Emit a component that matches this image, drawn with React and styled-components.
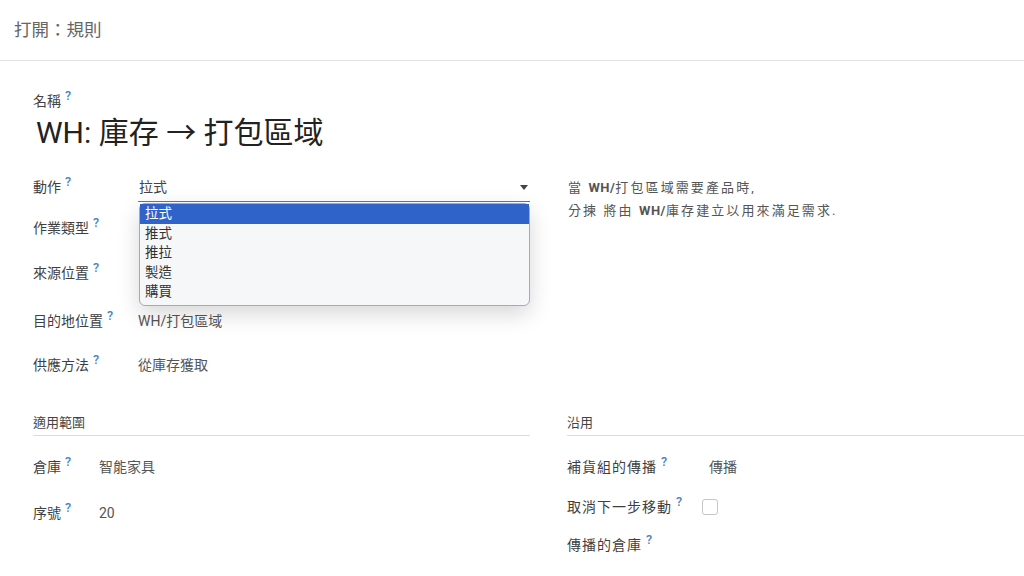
import React from 'react';
import styled, { createGlobalStyle } from 'styled-components';

const GlobalStyle = createGlobalStyle`
  html, body {
    margin: 0;
    padding: 0;
    background: #ffffff;
  }
  body {
    font-family: Roboto, "Noto Sans CJK TC", "Noto Sans", sans-serif;
    color: #333333;
  }
`;

const Page = styled.div`
  width: 1024px;
  height: 576px;
  overflow: hidden;
  background: #ffffff;
`;

const ControlBar = styled.div`
  height: 61px;
  display: flex;
  align-items: center;
  padding: 0 0 4px 14px;
  box-sizing: border-box;
  border-bottom: 1px solid #e3e3e3;
  font-size: 17.5px;
  color: #666666;
`;

const Sheet = styled.div`
  padding: 30px 0 0 33px;
`;

const NameLabel = styled.div`
  font-size: 14px;
  color: #444444;
  line-height: 20px;
`;

const Title = styled.h1`
  margin: 4px 0 0 3px;
  font-size: 30px;
  font-weight: 400;
  color: #222222;
  line-height: 36px;
`;

const TopGrid = styled.div`
  display: grid;
  grid-template-columns: 497px 1fr;
  column-gap: 38px;
  margin-top: 26px;
`;

const FieldList = styled.div`
  display: flex;
  flex-direction: column;
`;

const Row = styled.div`
  display: flex;
  align-items: flex-start;
  height: ${(p) => p.h || 44}px;
`;

const Label = styled.div`
  width: ${(p) => p.w}px;
  flex-shrink: 0;
  font-size: 14px;
  line-height: 20px;
  color: #3f3f3f;
  letter-spacing: ${(p) => p.ls || 0}px;
`;

const Help = styled.span`
  display: inline-block;
  font-size: 12.5px;
  font-weight: 500;
  line-height: 0;
  color: #4a84c0;
  margin-left: 4px;
  letter-spacing: 0;
  transform: translateY(-6px);
`;

const Value = styled.div`
  font-size: 14px;
  line-height: 20px;
  color: #555555;
`;

const SelectWrap = styled.div`
  position: relative;
  flex: 1;
`;

const Select = styled.div`
  height: 24px;
  display: flex;
  align-items: flex-start;
  justify-content: space-between;
  padding: 0 2px 0 1px;
  font-size: 14px;
  line-height: 20px;
  color: #444444;
  border-bottom: 1px solid #6a6fa8;
`;

const Caret = styled.span`
  width: 0;
  height: 0;
  margin-top: 8px;
  border-left: 4.5px solid transparent;
  border-right: 4.5px solid transparent;
  border-top: 5px solid #444444;
`;

const Menu = styled.ul`
  position: absolute;
  top: 26px;
  left: 1px;
  right: 0;
  margin: 0;
  padding: 0 0 3px;
  list-style: none;
  background: #f6f7f9;
  border: 1px solid #a9aab0;
  border-radius: 6px;
  box-shadow: 0 8px 22px rgba(0, 0, 0, 0.16);
  z-index: 5;
`;

const Option = styled.li`
  height: 19.5px;
  line-height: 19.5px;
  padding-left: 5px;
  font-size: 13.5px;
  color: ${(p) => (p.active ? '#ffffff' : '#333333')};
  background: ${(p) => (p.active ? '#3063c9' : 'transparent')};
`;

const HelpText = styled.div`
  font-size: 13px;
  line-height: 23px;
  color: #555555;
  letter-spacing: 2.1px;
  margin-top: -1px;
  b {
    font-weight: 700;
    letter-spacing: 0.5px;
  }
`;

const GroupsGrid = styled.div`
  display: grid;
  grid-template-columns: 497px 1fr;
  column-gap: 37px;
  margin-top: 29px;
`;

const GroupTitle = styled.div`
  font-size: 13px;
  line-height: 18px;
  color: #444444;
  padding-bottom: 3px;
  border-bottom: 1px solid #dcdcdc;
  margin-bottom: 21px;
`;

const Checkbox = styled.span`
  display: inline-block;
  width: 14px;
  height: 14px;
  border: 1px solid #c5c5c5;
  border-radius: 3px;
  margin: 2px 0 0 -1px;
  background: #ffffff;
`;

const actions = ['拉式', '推式', '推拉', '製造', '購買'];

export default function App() {
  return (
    <Page>
      <GlobalStyle />
      <ControlBar>打開：規則</ControlBar>
      <Sheet>
        <NameLabel>
          名稱<Help>?</Help>
        </NameLabel>
        <Title>WH: 庫存 → 打包區域</Title>
        <TopGrid>
          <FieldList>
            <Row h={41}>
              <Label w={105}>
                動作<Help>?</Help>
              </Label>
              <SelectWrap>
                <Select>
                  拉式
                  <Caret />
                </Select>
                <Menu>
                  {actions.map((a, i) => (
                    <Option key={a} active={i === 0}>
                      {a}
                    </Option>
                  ))}
                </Menu>
              </SelectWrap>
            </Row>
            <Row h={45}>
              <Label w={105}>
                作業類型<Help>?</Help>
              </Label>
            </Row>
            <Row h={48}>
              <Label w={105}>
                來源位置<Help>?</Help>
              </Label>
            </Row>
            <Row h={44}>
              <Label w={105}>
                目的地位置<Help>?</Help>
              </Label>
              <Value>WH/打包區域</Value>
            </Row>
            <Row h={30}>
              <Label w={105}>
                供應方法<Help>?</Help>
              </Label>
              <Value>從庫存獲取</Value>
            </Row>
          </FieldList>
          <HelpText>
            當 <b>WH/</b>打包區域需要產品時,
            <br />
            分揀 將由 <b>WH/</b>庫存建立以用來滿足需求.
          </HelpText>
        </TopGrid>
        <GroupsGrid>
          <FieldList>
            <GroupTitle>適用範圍</GroupTitle>
            <Row h={46}>
              <Label w={66}>
                倉庫<Help>?</Help>
              </Label>
              <Value>智能家具</Value>
            </Row>
            <Row h={40}>
              <Label w={66}>
                序號<Help>?</Help>
              </Label>
              <Value>20</Value>
            </Row>
          </FieldList>
          <FieldList>
            <GroupTitle>沿用</GroupTitle>
            <Row h={40}>
              <Label w={142} ls={1}>
                補貨組的傳播<Help>?</Help>
              </Label>
              <Value>傳播</Value>
            </Row>
            <Row h={38}>
              <Label w={136} ls={1}>
                取消下一步移動<Help>?</Help>
              </Label>
              <Checkbox />
            </Row>
            <Row h={38}>
              <Label w={136} ls={1}>
                傳播的倉庫<Help>?</Help>
              </Label>
            </Row>
          </FieldList>
        </GroupsGrid>
      </Sheet>
    </Page>
  );
}
